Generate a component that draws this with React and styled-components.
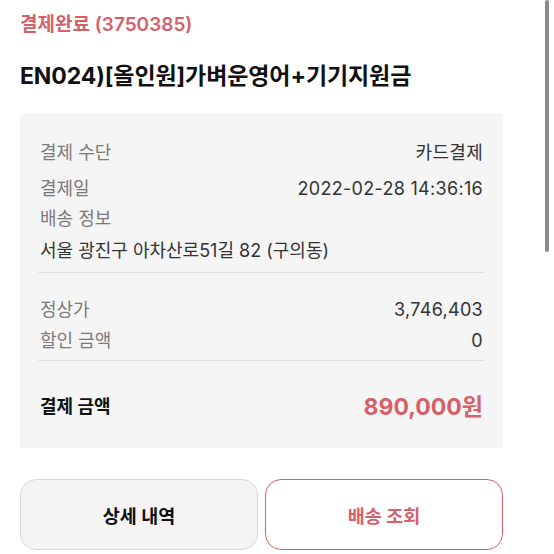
import styled, { createGlobalStyle } from "styled-components";

const Global = createGlobalStyle`
  body {
    margin: 0;
    background: #fff;
    font-family: Inter, "Noto Sans CJK KR", sans-serif;
    color: #222;
  }
`;

const RED = "#d6606a";

const Page = styled.main`
  width: 554px;
  height: 554px;
  box-sizing: border-box;
  padding: 11px 51px 0 20px;
  overflow: hidden;
`;

const Status = styled.div`
  font-size: 19px;
  font-weight: 600;
  line-height: 28px;
  color: ${RED};
`;

const Title = styled.h1`
  margin: 22px 0 0;
  font-size: 23px;
  font-weight: 700;
  line-height: 30px;
  color: #111;
  letter-spacing: -0.1px;
`;

const Card = styled.section`
  margin-top: 22px;
  background: #f5f5f5;
  border-radius: 4px;
  padding: 25px 20px 26px;
`;

const Row = styled.div`
  display: flex;
  justify-content: space-between;
  align-items: center;
  line-height: 30px;
  font-size: 18px;
  margin-top: ${(p) => p.$gap || 0}px;
`;

const Label = styled.span`
  color: ${(p) => (p.$strong ? "#111" : "#7a7a7a")};
  font-weight: ${(p) => (p.$strong ? 700 : 400)};
`;

const Value = styled.span`
  color: ${(p) => p.$color || "#333"};
  font-weight: ${(p) => (p.$strong ? 700 : 400)};
  font-size: ${(p) => (p.$big ? 23 : 18)}px;
  letter-spacing: ${(p) => (p.$big ? 0 : 0.3)}px;
`;

const Address = styled.div`
  margin-top: 2px;
  font-size: 18px;
  line-height: 30px;
  color: #333;
`;

const Divider = styled.hr`
  border: none;
  border-top: 1px solid #e0e0e0;
  margin: ${(p) => p.$top}px -2px ${(p) => p.$bottom}px;
`;

const Buttons = styled.div`
  display: grid;
  grid-template-columns: 1fr 1fr;
  gap: 7px;
  margin-top: 31px;
`;

const Button = styled.button`
  height: 71px;
  border-radius: 16px;
  font-family: inherit;
  font-size: 18.5px;
  font-weight: 700;
  background: ${(p) => (p.$primary ? "#fff" : "#f4f4f4")};
  border: 1px solid ${(p) => (p.$primary ? RED : "#d8d8d8")};
  color: ${(p) => (p.$primary ? RED : "#111")};
`;

const Scrollbar = styled.div`
  position: fixed;
  top: 0;
  right: 5px;
  width: 4px;
  height: 252px;
  border-radius: 2px;
  background: #8a8a8a;
`;

export default function App() {
  return (
    <>
      <Global />
      <Page>
        <Status>결제완료 (3750385)</Status>
        <Title>EN024)[올인원]가벼운영어+기기지원금</Title>
        <Card>
          <Row>
            <Label>결제 수단</Label>
            <Value>카드결제</Value>
          </Row>
          <Row $gap={6}>
            <Label>결제일</Label>
            <Value>2022-02-28 14:36:16</Value>
          </Row>
          <Row>
            <Label>배송 정보</Label>
          </Row>
          <Address>서울 광진구 아차산로51길 82 (구의동)</Address>
          <Divider $top={6} $bottom={22} />
          <Row>
            <Label>정상가</Label>
            <Value>3,746,403</Value>
          </Row>
          <Row $gap={1}>
            <Label>할인 금액</Label>
            <Value>0</Value>
          </Row>
          <Divider $top={4} $bottom={31} />
          <Row>
            <Label $strong>결제 금액</Label>
            <Value $strong $big $color={RED}>
              890,000원
            </Value>
          </Row>
        </Card>
        <Buttons>
          <Button>상세 내역</Button>
          <Button $primary>배송 조회</Button>
        </Buttons>
      </Page>
      <Scrollbar />
    </>
  );
}
